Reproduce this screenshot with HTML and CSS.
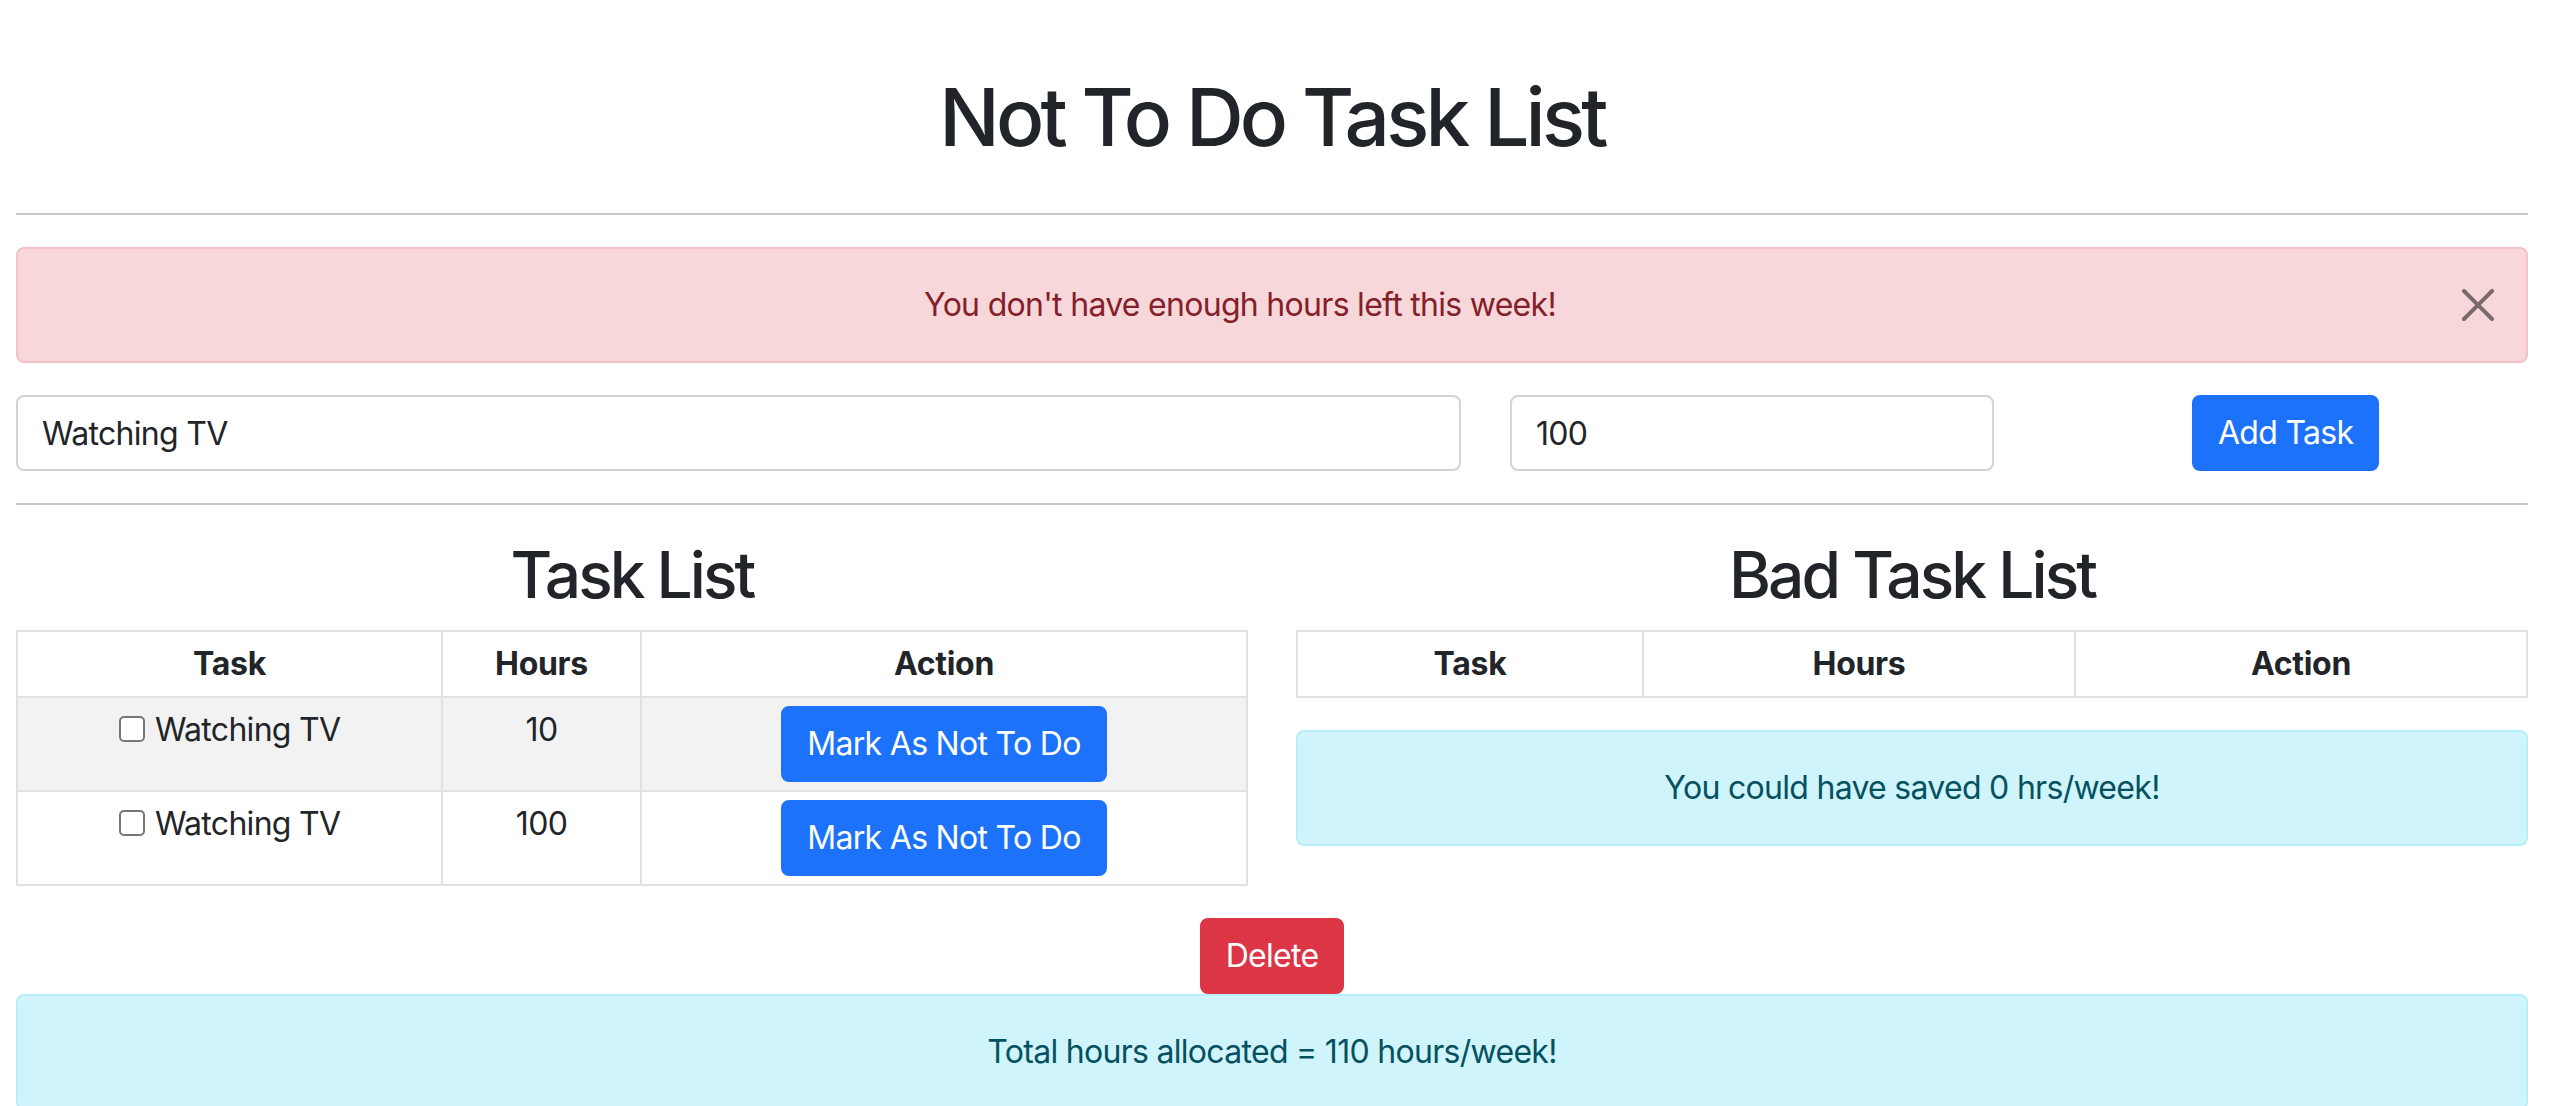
FILE: index.html
```html
<!DOCTYPE html>
<html lang="en">
<head>
<meta charset="utf-8">
<title>Not To Do Task List</title>
<link rel="stylesheet" href="styles.css">
</head>
<body>
<div class="app">
  <header class="title-row">
    <h1 class="title">Not To Do Task List</h1>
  </header>
  <hr class="divider">

  <div class="alert alert-danger alert-dismissible" role="alert">
    You don't have enough hours left this week!
    <button type="button" class="btn-close" aria-label="Close">
      <svg viewBox="0 0 16 16" width="32" height="32" aria-hidden="true"><path d="M.293.293a1 1 0 0 1 1.414 0L8 6.586 14.293.293a1 1 0 1 1 1.414 1.414L9.414 8l6.293 6.293a1 1 0 0 1-1.414 1.414L8 9.414l-6.293 6.293a1 1 0 0 1-1.414-1.414L6.586 8 .293 1.707a1 1 0 0 1 0-1.414z"/></svg>
    </button>
  </div>

  <form class="task-form">
    <input class="form-control" type="text" name="task" value="Watching TV">
    <input class="form-control no-spin" type="number" name="hours" value="100">
    <div class="form-action">
      <button type="button" class="btn btn-primary">Add Task</button>
    </div>
  </form>
  <hr class="divider">

  <div class="lists">
    <section class="list">
      <h2 class="list-title">Task List</h2>
      <table class="table table-striped">
        <colgroup>
          <col class="w-task-a"><col class="w-hours-a"><col>
        </colgroup>
        <thead>
          <tr><th>Task</th><th>Hours</th><th>Action</th></tr>
        </thead>
        <tbody>
          <tr>
            <td><input type="checkbox" class="check"> Watching TV</td>
            <td>10</td>
            <td><button type="button" class="btn btn-primary">Mark As Not To Do</button></td>
          </tr>
          <tr>
            <td><input type="checkbox" class="check"> Watching TV</td>
            <td>100</td>
            <td><button type="button" class="btn btn-primary">Mark As Not To Do</button></td>
          </tr>
        </tbody>
      </table>
    </section>

    <section class="list">
      <h2 class="list-title">Bad Task List</h2>
      <table class="table">
        <colgroup>
          <col class="w-task-b"><col class="w-hours-b"><col>
        </colgroup>
        <thead>
          <tr><th>Task</th><th>Hours</th><th>Action</th></tr>
        </thead>
        <tbody></tbody>
      </table>
      <div class="alert alert-info" role="alert">You could have saved 0 hrs/week!</div>
    </section>
  </div>

  <div class="delete-row">
    <button type="button" class="btn btn-danger">Delete</button>
  </div>
  <div class="alert alert-info alert-total" role="alert">Total hours allocated = 110 hours/week!</div>
</div>
</body>
</html>
```

FILE: styles.css
```css
html, body {
  overflow: hidden;
}

body {
  margin: 0;
  background: #ffffff;
  color: #212529;
  font-family: Inter, "Noto Sans", "Liberation Sans", sans-serif;
  font-size: 32px;
  line-height: 1.5;
  letter-spacing: -0.022em;
}

.app {
  margin: 0 24px 0 16px;
}

.title-row {
  display: flow-root;
}

.title {
  margin: 69px 0 16px;
  font-size: 80px;
  font-weight: 500;
  line-height: 1.2;
  letter-spacing: -0.047em;
  text-align: center;
}

.divider {
  margin: 32px 0;
  height: 2px;
  border: 0;
  background: #c8c9ca;
}

.alert {
  position: relative;
  margin-bottom: 32px;
  padding: 32px;
  border: 2px solid transparent;
  border-radius: 8px;
  text-align: center;
}

.alert-danger {
  color: #842029;
  background: #f8d7da;
  border-color: #f5c2c7;
}

.alert-info {
  color: #055160;
  background: #cff4fc;
  border-color: #b6effb;
}

.alert-dismissible {
  padding-right: 96px;
}

.btn-close {
  position: absolute;
  top: 0;
  right: 0;
  box-sizing: content-box;
  width: 32px;
  height: 32px;
  padding: 40px 32px;
  border: 0;
  background: transparent;
  opacity: 0.5;
  cursor: pointer;
}

.btn-close svg {
  display: block;
  fill: #000;
}

.alert-total {
  margin-bottom: 0;
}

.task-form {
  display: grid;
  grid-template-columns: 1445px 484px 1fr;
  column-gap: 49px;
  align-items: center;
}

.form-action {
  padding-left: 149px;
}

.form-control {
  display: block;
  box-sizing: border-box;
  width: 100%;
  height: 76px;
  padding: 12px 24px;
  font-family: inherit;
  font-size: 32px;
  line-height: 48px;
  letter-spacing: inherit;
  color: #212529;
  background: #ffffff;
  border: 2px solid #ced4da;
  border-radius: 8px;
}

.no-spin {
  -moz-appearance: textfield;
  appearance: textfield;
}

.no-spin::-webkit-outer-spin-button,
.no-spin::-webkit-inner-spin-button {
  -webkit-appearance: none;
  margin: 0;
}

.btn {
  display: inline-block;
  padding: 12px 24px;
  font-family: inherit;
  font-size: 32px;
  font-weight: 400;
  line-height: 48px;
  letter-spacing: inherit;
  color: #ffffff;
  border: 2px solid transparent;
  border-radius: 8px;
  cursor: pointer;
}

.btn-primary {
  background: #1d72fb;
  border-color: #1d72fb;
}

.btn-danger {
  background: #dc3545;
  border-color: #dc3545;
}

.lists {
  display: grid;
  grid-template-columns: 1fr 1fr;
  column-gap: 48px;
  align-items: start;
}

.list-title {
  margin: 0 0 16px;
  font-size: 64px;
  font-weight: 500;
  line-height: 1.2;
  letter-spacing: -0.046em;
  text-align: center;
}

.table {
  width: 100%;
  margin-bottom: 32px;
  table-layout: fixed;
  border-collapse: collapse;
  border: 2px solid #dee2e6;
}

.table th,
.table td {
  padding: 8px;
  border: 2px solid #dee2e6;
  text-align: center;
  vertical-align: top;
}

.table th {
  font-weight: 700;
  letter-spacing: -0.01em;
}

.table-striped tbody tr:nth-child(odd) td {
  background: #f2f2f2;
}

.w-task-a { width: 425px; }
.w-hours-a { width: 199px; }
.w-task-b { width: 346px; }
.w-hours-b { width: 432px; }

.check {
  appearance: none;
  -webkit-appearance: none;
  display: inline-block;
  box-sizing: border-box;
  width: 26px;
  height: 26px;
  margin: 0 2px 0 0;
  vertical-align: -1px;
  background: #ffffff;
  border: 2px solid #767676;
  border-radius: 5px;
}

.delete-row {
  display: flex;
  justify-content: center;
}
```
